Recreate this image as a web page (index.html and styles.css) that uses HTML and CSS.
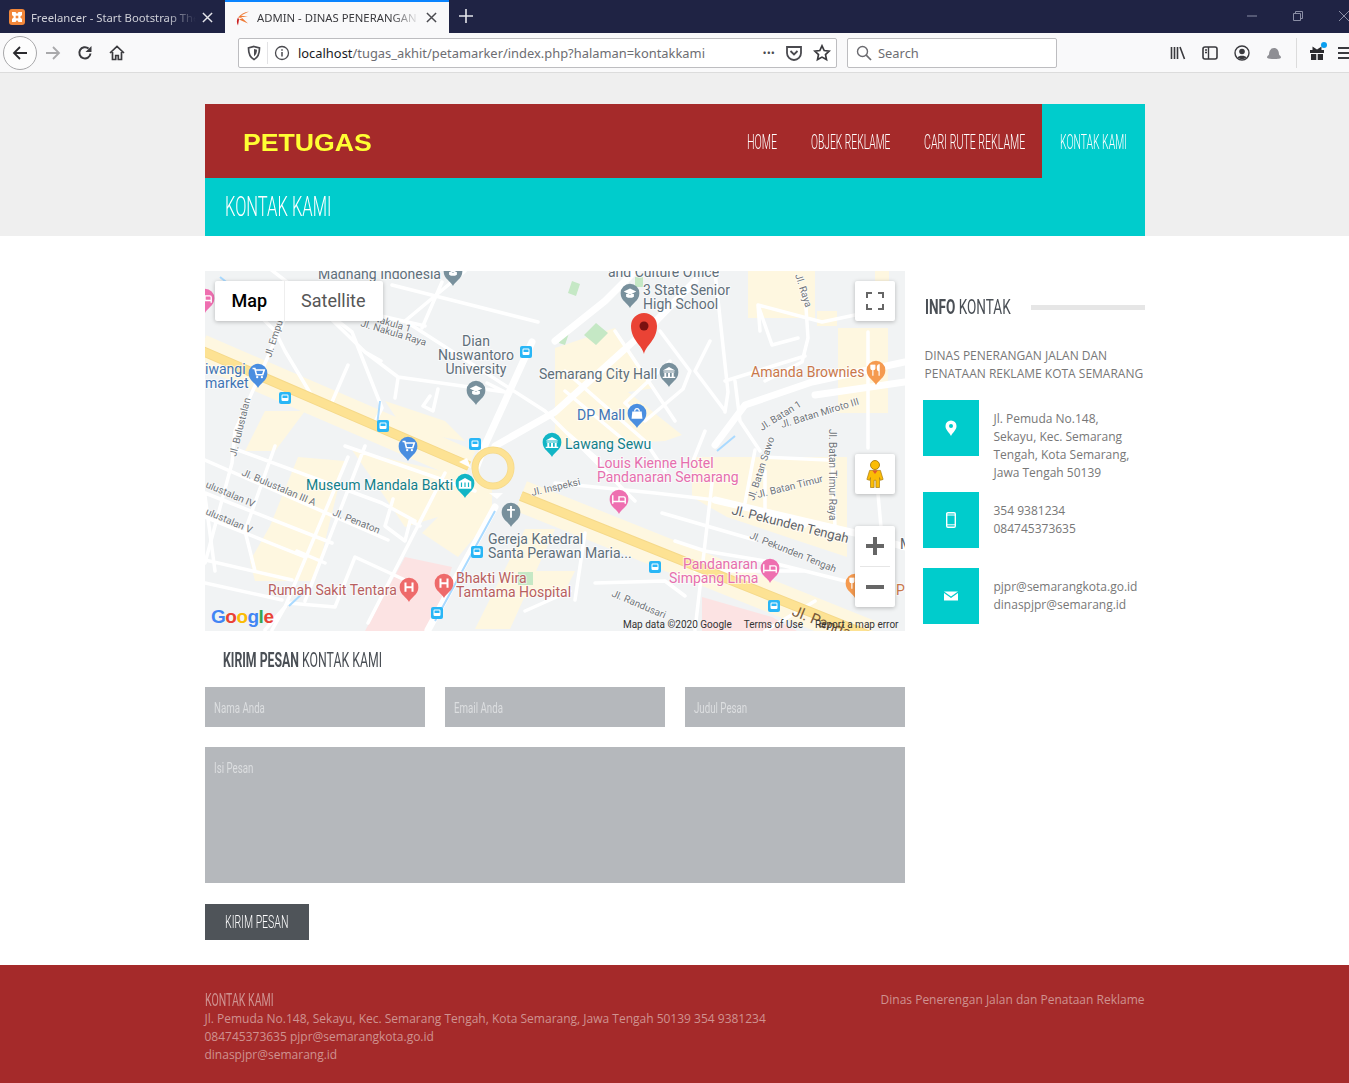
FILE: index.html
```html
<!DOCTYPE html>
<html lang="id">
<head>
<meta charset="utf-8">
<title>ADMIN - DINAS PENERANGAN</title>
<link rel="stylesheet" href="styles.css">
</head>
<body>
<div class="tabbar">
  <div class="tab tab-off">
    <svg class="fav" viewBox="0 0 16 16"><rect width="16" height="16" rx="3" fill="#f2873a"/><path d="M3 3h3.500L8 5l1.500-2H13v3l-2 2 2 2v3H9.500L8 11l-1.500 2H3v-3l2-2-2-2z" fill="#fff"/><rect x="6.700" y="6.700" width="2.600" height="2.600" fill="#f2873a"/></svg>
    <span class="tab-text">Freelancer - Start Bootstrap The</span>
    <svg class="tabx" viewBox="0 0 12 12"><path d="M1 1l10 10M11 1L1 11" stroke="#e4e5ea" stroke-width="1.600"/></svg>
  </div>
  <div class="tab tab-on">
    <svg class="fav" viewBox="0 0 16 16"><path d="M14 1.500C9 2 6 4 3 7.500L8 8 4 9.500l9 4-7-6.500 7 0-7-1.500z" fill="#ef7a35"/><path d="M3 7.500C1.500 10 1.500 13 3 15.500l1-6z" fill="#cc2020"/></svg>
    <span class="tab-text">ADMIN - DINAS PENERANGAN</span>
    <svg class="tabx" viewBox="0 0 12 12"><path d="M1 1l10 10M11 1L1 11" stroke="#4a4a4f" stroke-width="1.600"/></svg>
  </div>
  <svg class="newtab" viewBox="0 0 14 14"><path d="M7 0v14M0 7h14" stroke="#e4e5ea" stroke-width="1.600"/></svg>
  <div class="winbtns">
    <svg viewBox="0 0 10 10"><path d="M0 5h10" stroke="#8a8ea5"/></svg>
    <svg viewBox="0 0 10 10"><path d="M.5 2.500h7v7h-7zM2.500 2.500v-2h7v7h-2" fill="none" stroke="#8a8ea5"/></svg>
    <svg viewBox="0 0 10 10"><path d="M0 0l10 10M10 0L0 10" stroke="#8a8ea5"/></svg>
  </div>
</div>

<div class="toolbar">
  <div class="backbtn"><svg viewBox="0 0 16 16"><path d="M15 8H2M8 2L2 8l6 6" fill="none" stroke="#2a2a2e" stroke-width="1.800"/></svg></div>
  <svg class="tool tool-fwd" viewBox="0 0 16 16"><path d="M1 8h13M8 2l6 6-6 6" fill="none" stroke="#a9a9ab" stroke-width="1.800"/></svg>
  <svg class="tool tool-reload" viewBox="0 0 16 16"><path d="M13.500 8.500A5.600 5.600 0 1 1 11.600 3.600" fill="none" stroke="#3a3a3e" stroke-width="2"/><path d="M14.500 1v6h-6z" fill="#3a3a3e"/></svg>
  <svg class="tool tool-home" viewBox="0 0 16 16"><path d="M1 8l7-6.500L15 8M3.500 7v7.500h3.200v-4h2.600v4h3.200V7" fill="none" stroke="#3a3a3e" stroke-width="1.700"/></svg>
  <div class="urlbar">
    <svg class="ic16" viewBox="0 0 16 16"><path d="M8 1.500l5.500 1.500c0 6-1.500 9.500-5.500 11.500C4 12.500 2.500 9 2.500 3z" fill="none" stroke="#4a4a4f" stroke-width="1.700"/><path d="M8 4l3 .8c0 3-.8 5-3 6.500z" fill="#4a4a4f"/></svg>
    <span class="urlsep"></span>
    <svg class="ic16" viewBox="0 0 16 16"><circle cx="8" cy="8" r="6.500" fill="none" stroke="#4a4a4f" stroke-width="1.300"/><path d="M8 7v4.500M8 4.200v1.600" stroke="#4a4a4f" stroke-width="1.500"/></svg>
    <span class="urltext"><b>localhost</b>/tugas_akhit/petamarker/index.php?halaman=kontakkami</span>
    <span class="dots">•••</span>
    <svg class="ic18" viewBox="0 0 18 18"><path d="M2 3h14v6a7 7 0 0 1-14 0z" fill="none" stroke="#4a4a4f" stroke-width="1.800"/><path d="M5.500 7L9 10.500 12.500 7" fill="none" stroke="#4a4a4f" stroke-width="1.800"/></svg>
    <svg class="ic18" viewBox="0 0 18 18"><path d="M9 1.800l2.200 4.700 5 .6-3.700 3.500 1 5L9 13.100l-4.500 2.500 1-5-3.700-3.500 5-.6z" fill="none" stroke="#3a3a3e" stroke-width="1.700"/></svg>
  </div>
  <div class="searchbar">
    <svg class="ic16" viewBox="0 0 16 16"><circle cx="6.500" cy="6.500" r="5" fill="none" stroke="#6a6a6f" stroke-width="1.400"/><path d="M10.200 10.200L15 15" stroke="#6a6a6f" stroke-width="1.700"/></svg>
    <span>Search</span>
  </div>
  <div class="rightic">
    <svg class="ic16" viewBox="0 0 16 16"><path d="M1.500 2v12M4.500 2v12M7.500 2v12M10 2l4.500 12" stroke="#3a3a3e" stroke-width="1.600" fill="none"/></svg>
    <svg class="ic16" viewBox="0 0 16 16"><rect x="1" y="2" width="14" height="12" rx="2" fill="none" stroke="#3a3a3e" stroke-width="1.600"/><path d="M6.500 2v12M3 5h2M3 7.500h2" stroke="#3a3a3e" stroke-width="1.400"/></svg>
    <svg class="ic16" viewBox="0 0 16 16"><circle cx="8" cy="8" r="7" fill="none" stroke="#3a3a3e" stroke-width="1.400"/><circle cx="8" cy="6.500" r="2.800" fill="#3a3a3e"/><path d="M3.500 12.500c1-2.500 8-2.500 9 0-2.500 2-6.500 2-9 0z" fill="#3a3a3e"/></svg>
    <svg class="ic16" viewBox="0 0 16 16"><path d="M1 12.500c0-1.500 1.500-2 2-3 0-4 2-6.500 5-6.500s5 2.500 5 6.500c.5 1 2 1.500 2 3 0 1-3 1.500-7 1.500s-7-.5-7-1.500z" fill="#8f8f94"/></svg>
    <span class="toolsep"></span>
    <span class="gift">
      <svg class="ic16" viewBox="0 0 16 16"><path d="M1 5h14v3H1zM2 9h5.300v6H2zM8.700 9H14v6H8.700zM3.500 1.500L8 4.500l4.500-3v3.500h-9z" fill="#2a2a2e"/></svg>
      <i class="giftdot"></i>
    </span>
    <svg class="ic16 menuic" viewBox="0 0 16 16"><path d="M1 3h14M1 8h14M1 13h14" stroke="#3a3a3e" stroke-width="1.800"/></svg>
  </div>
</div>

<div class="hero">
  <div class="wrap">
    <header class="head">
      <div class="brand"><span class="brand-text">PETUGAS</span></div>
      <nav class="nav">
        <a class="nl nl-1"><span class="cond c-nav">HOME</span></a>
        <a class="nl nl-2"><span class="cond c-nav">OBJEK REKLAME</span></a>
        <a class="nl nl-3"><span class="cond c-nav">CARI RUTE REKLAME</span></a>
        <a class="nl nl-4 active"><span class="cond c-nav">KONTAK KAMI</span></a>
      </nav>
    </header>
    <div class="titlebar"><span class="cond c-title">KONTAK KAMI</span></div>
  </div>
</div>

<main class="wrap content">
  <section class="col-main">
    <div class="map">
      <svg class="mapsvg" viewBox="0 0 700 360" xmlns="http://www.w3.org/2000/svg">
        <defs>
          <path id="pin" transform="scale(.78)" d="M0 0C-2-6-12-9-12-19a12 12 0 0 1 24 0C12-9 2-6 0 0z"/>
          <g id="bus"><rect x="-6" y="-6" width="12" height="12" rx="2" fill="#29b6f6"/><rect x="-3.500" y="-3.500" width="7" height="6.500" rx="1.200" fill="#fff"/><rect x="-2.500" y="-2.500" width="5" height="2.500" fill="#29b6f6"/></g>
          <g id="hosp" transform="scale(.78)"><path d="M-4.500-25v12M4.500-25v12M-4.500-19h9" stroke="#fff" stroke-width="2.600" fill="none"/></g>
          <g id="bed" transform="scale(.78)"><path d="M-8-24v11M-8-16H8v3M-8-16h16v-4a2 2 0 0 0-2-2h-6v6" stroke="#fff" stroke-width="1.800" fill="none"/></g>
          <g id="cart" transform="scale(.78)"><path d="M-7-25h3l2 8h8l2-6H-3" stroke="#fff" stroke-width="2" fill="none"/><circle cx="-1" cy="-14" r="1.500" fill="#fff"/><circle cx="5" cy="-14" r="1.500" fill="#fff"/></g>
          <g id="cap" transform="scale(.78)"><path d="M-8-21l8-4 8 4-8 4zM-5-18v3.500c3 2 7 2 10 0V-18" fill="#fff"/></g>
          <g id="hall" transform="scale(.78)"><path d="M-8-21l8-4.500L8-21zM-7-20h14v1.500H-7zM-6-18h2.500v5H-6zM-1.300-18h2.600v5h-2.600zM3.500-18H6v5H3.500zM-8-13H8v1.500H-8z" fill="#fff"/></g>
          <g id="bag" transform="scale(.78)"><path d="M-6-21H6l1 9H-7z" fill="#fff"/><path d="M-3-21c0-5 6-5 6 0" stroke="#fff" stroke-width="1.500" fill="none"/></g>
          <g id="muse" transform="scale(.78)"><path d="M-8-21l8-4.500L8-21v9H-8z" fill="#fff"/><path d="M-4.500-20v6M0-20v6M4.500-20v6" stroke="#12b5c5" stroke-width="1.500"/></g>
          <g id="cross" transform="scale(.78)"><path d="M0-27v15M-5-22H5" stroke="#fff" stroke-width="2.400"/></g>
          <g id="fork" transform="scale(.78)"><path d="M-4-26v14M-6.500-26v5c0 2 5 2 5 0v-5M4-26v14c0 0 0-6 0-6-3 0-3-8 0-8z" stroke="#fff" stroke-width="1.500" fill="#fff"/></g>
        </defs>
        <rect class="m-bg" width="700" height="360"/>
        <g class="m-pale">
          <path d="M543 0h67v47h-67zM612 40h20v15h-20zM633 57h50v85h-50zM350 77l60-20 40 60-27 4 54 43-17 6-110 5zM670 0h14v20h-14z"/>
          <path d="M93 186l47 4-30 120H50l-5-20 20-35zM147 179l140 33v33l-34 41-36-24 16-16-33 10-27-40zM487 186h155v100l-120-40-35-20z"/>
          <path d="M180 130l60 20 20 20-60-10zM320 258h30l-45 100h-35zM310 300h60l-10 20-60 10zM60 140h40l-30 40H40z"/>
        </g>
        <path class="m-halo" d="M-5 79L264 195M316 225L665 365"/>
        <path class="m-pink" d="M200 286l-40 74h65l22-64z"/>
        <path class="m-pink" d="M497 326l70 20 25 14h-95z"/>
        <path class="m-green" d="M391 52l12 10-12 12-12-10zM367 10l8 3-4 12-8-3zM430 6h8v10h-8zM358 60l6 2-4 12-6-2zM313 301h15v13h-15z"/>
        <g class="m-road">
          <path d="M80 47L30 160 27 192 0 292M60-6L147 61 177 137 170 151M160 81L193 106 300 121M187 14L333 51M193 107L190 127M143 94L127 131M237 11L217 57M60 20L50 40 70 60 80 80 110 130M120 42L160 81 176 90M300 121L282 112M163 42L220 55M225 125L218 135 228 140 233 118"/>
          <path d="M0 189L183 269M33 179L177 232 210 250M0 222L127 272M0 246L100 286M0 289L87 309M0 312L77 329M83 332L130 336 150 286 200 309M143 186L80 336 67 359M160 175L100 330M240 202L163 352M140 175L270 220M70 175L40 260 50 300M188 228L180 255 200 270 205 250 215 255M92 280L120 292M0 225L10 300"/>
          <path d="M510 1L523 121 520 141M600 21L603 67 597 91 560 110M683 37L617 51 553 34 567 74 593 67M663 61L663 177M553 34L555 60M520 110L600 85M505 70L490 100 520 140M530 110L535 150M535 150L555 180M455 60L485 100 478 118 440 150 420 132 465 90M410 60L470 150M360 120L420 170M500 160L488 190"/>
          <path d="M507 212L490 359M457 242L550 269M350 212L450 222 510 229M550 179L540 232M557 186L623 189M627 186L630 256M380 262L370 329M390 312L460 310 480 325M560 200L560 245 600 255M670 190L680 300M80 336L60 359M260 0L200 50 340 140 430 230M360 100L440 170 460 200M470 270L500 280 560 290 640 310M360 160L395 190M490 300L540 300 600 300M610 330L560 360M320 340L365 320"/>
        </g>
        <g class="m-road m-wide">
          <path d="M327 71L280 174 270 200M290 175L350 141 450 51 490 10M700 91L607 111 540 134 510 174M700 111L610 124M510 229L650 262 700 276M290 236L223 359M430 0L400 30 350 70"/>
        </g>
        <path class="m-stream" d="M290 240L230 350M100 320L84 335M15 6L30 18M175 130L172 155M530 165L512 180"/>
        <g fill="none">
          <path class="m-yedge" d="M-5 79L264 195M316 225L665 365"/>
          <path class="m-yel" d="M-5 79L264 195M316 225L665 365"/>
          <circle class="m-edgering" cx="288" cy="197" r="18"/>
          <circle class="m-ring" cx="288" cy="197" r="18"/>
        </g>
        <path class="m-gap" d="M262 187l-8 4 12 6zM284 222h14l-6 6z"/>

        <g class="m-bus">
          <use href="#bus" x="80" y="127"/><use href="#bus" x="178" y="155"/><use href="#bus" x="321" y="81"/><use href="#bus" x="270" y="173"/><use href="#bus" x="272" y="281"/><use href="#bus" x="232" y="342"/><use href="#bus" x="450" y="296"/><use href="#bus" x="569" y="335"/>
        </g>

        <g class="t-s">
          <text transform="translate(155 46) rotate(17)">Jl. Nakula 1</text>
          <text transform="translate(155 55) rotate(17)">Jl. Nakula Raya</text>
          <text transform="translate(66 87) rotate(-72)">Jl. Empu</text>
          <text transform="translate(31 186) rotate(-76)">Jl. Bulustalan</text>
          <text transform="translate(36 204) rotate(23)">Jl. Bulustalan III A</text>
          <text transform="translate(0 216) rotate(23)">ulustalan IV</text>
          <text transform="translate(0 243) rotate(23)">ulustalan V</text>
          <text transform="translate(127 244) rotate(22)">Jl. Penaton</text>
          <text transform="translate(327 225) rotate(-13)">Jl. Inspeksi</text>
          <text transform="translate(557 160) rotate(-32)">Jl. Batan 1</text>
          <text transform="translate(577 157) rotate(-17)">Jl. Batan Miroto III</text>
          <text transform="translate(624 158) rotate(90)">Jl. Batan Timur Raya</text>
          <text transform="translate(549 230) rotate(-72)">Jl. Batan Sawo</text>
          <text transform="translate(553 227) rotate(-14)">Jl. Batan Timur</text>
          <text transform="translate(544 267) rotate(22)">Jl. Pekunden Tengah</text>
          <text transform="translate(406 325) rotate(23)">Jl. Randusari</text>
          <text transform="translate(590 4) rotate(72)">Jl. Raya</text>
        </g>
        <text class="t-m" transform="translate(526 243) rotate(14)">Jl. Pekunden Tengah</text>
        <text class="t-road" transform="translate(586 344) rotate(22)">Jl. Pandanaran</text>

        <g class="t-l t-grey">
          <text x="113" y="8">Madhang Indonesia</text>
          <text x="403" y="6">and Culture Office</text>
          <text x="438" y="24">3 State Senior</text>
          <text x="438" y="38">High School</text>
          <text x="271" y="75" text-anchor="middle">Dian</text>
          <text x="271" y="89" text-anchor="middle">Nuswantoro</text>
          <text x="271" y="103" text-anchor="middle">University</text>
          <text x="334" y="108">Semarang City Hall</text>
          <text x="283" y="273">Gereja Katedral</text>
          <text x="283" y="287">Santa Perawan Maria...</text>
        </g>
        <g class="t-l">
          <text class="c-blue" x="0" y="103">iwangi</text>
          <text class="c-blue" x="0" y="117">market</text>
          <text class="c-orange" x="546" y="106">Amanda Brownies</text>
          <text class="c-blue" x="372" y="149">DP Mall</text>
          <text class="c-teal" x="360" y="178">Lawang Sewu</text>
          <text class="c-hotel" x="392" y="197">Louis Kienne Hotel</text>
          <text class="c-hotel" x="392" y="211">Pandanaran Semarang</text>
          <text class="c-teal" x="101" y="219">Museum Mandala Bakti</text>
          <text class="c-red" x="63" y="324">Rumah Sakit Tentara</text>
          <text class="c-red" x="251" y="312">Bhakti Wira</text>
          <text class="c-red" x="251" y="326">Tamtama Hospital</text>
          <text class="c-hotel" x="478" y="298">Pandanaran</text>
          <text class="c-hotel" x="464" y="312">Simpang Lima</text>
          <text class="c-orange" x="691" y="324">P</text>
          <text class="t-dark" x="695" y="278">M</text>
        </g>

        <g class="p-steel"><use href="#pin" x="248" y="15"/><use href="#pin" x="425" y="37"/><use href="#pin" x="271" y="134"/><use href="#pin" x="464" y="116"/><use href="#pin" x="306" y="256"/></g>
        <g class="p-blue"><use href="#pin" x="53" y="117"/><use href="#pin" x="203" y="190"/><use href="#pin" x="432" y="157"/></g>
        <g class="p-teal"><use href="#pin" x="347" y="186"/><use href="#pin" x="260" y="227"/></g>
        <g class="p-pink"><use href="#pin" x="414" y="243"/><use href="#pin" x="565" y="312"/><use href="#pin" x="0" y="42"/></g>
        <g class="p-red"><use href="#pin" x="204" y="331"/><use href="#pin" x="239" y="327"/></g>
        <g class="p-orange"><use href="#pin" x="671" y="114"/><use href="#pin" x="650" y="327"/></g>

        <use href="#cap" x="248" y="15"/>
        <use href="#cap" x="425" y="37"/><use href="#cap" x="271" y="134"/><use href="#hall" x="464" y="116"/><use href="#cross" x="306" y="256"/>
        <use href="#cart" x="53" y="117"/><use href="#cart" x="203" y="190"/><use href="#bag" x="432" y="157"/>
        <use href="#hall" x="347" y="186"/><use href="#muse" x="260" y="227"/>
        <use href="#bed" x="414" y="243"/><use href="#bed" x="565" y="312"/><use href="#bed" x="0" y="42"/>
        <use href="#hosp" x="204" y="331"/><use href="#hosp" x="239" y="327"/>
        <use href="#fork" x="671" y="114"/><use href="#fork" x="650" y="327"/>

        <path class="p-main" d="M439 83c-2-9-13-14-13-28a13 13 0 0 1 26 0c0 14-11 19-13 28z"/>
        <circle class="p-dot" cx="439" cy="55" r="4.500"/>

        <text class="g-logo" x="6" y="352"><tspan fill="#4285f4">G</tspan><tspan fill="#ea4335">o</tspan><tspan fill="#fbbc05">o</tspan><tspan fill="#4285f4">g</tspan><tspan fill="#34a853">l</tspan><tspan fill="#ea4335">e</tspan></text>
      </svg>

      <div class="maptype">
        <span class="mt mt-on">Map</span>
        <span class="mt">Satellite</span>
      </div>
      <div class="mapbtn fs"><svg viewBox="0 0 18 18"><path d="M1 6V1h5M12 1h5v5M17 12v5h-5M6 17H1v-5" fill="none" stroke="#666" stroke-width="2"/></svg></div>
      <div class="mapbtn peg"><svg viewBox="0 0 20 32"><circle cx="10" cy="6" r="5" fill="#fbbc05" stroke="#a87a10"/><path d="M4 12h12l3 10-3 1-1-3v11h-4v-8h-2v8H5V20l-1 3-3-1z" fill="#fbbc05" stroke="#a87a10" stroke-width=".8"/><path d="M7 12l3 4 3-4z" fill="#e2572f"/></svg></div>
      <div class="mapbtn zoomctl">
        <svg viewBox="0 0 18 18"><path d="M9 0v18M0 9h18" stroke="#666" stroke-width="4"/></svg>
        <i class="zsep"></i>
        <svg viewBox="0 0 18 18"><path d="M0 9h18" stroke="#666" stroke-width="4"/></svg>
      </div>
      <div class="mapfoot">
        <span>Map data ©2020 Google</span><span>Terms of Use</span><span>Report a map error</span>
      </div>
    </div>

    <h3 class="formhead"><span class="cond c-form"><b>KIRIM PESAN</b> KONTAK KAMI</span></h3>
    <form class="form">
      <div class="frow">
        <div class="inp"><span class="cond c-ph">Nama Anda</span></div>
        <div class="inp"><span class="cond c-ph">Email Anda</span></div>
        <div class="inp"><span class="cond c-ph">Judul Pesan</span></div>
      </div>
      <div class="inp area"><span class="cond c-ph">Isi Pesan</span></div>
      <div class="btn"><span class="cond c-btn">KIRIM PESAN</span></div>
    </form>
  </section>

  <aside class="col-side">
    <div class="sidehead"><span class="cond c-side"><b>INFO</b> KONTAK</span><i class="siderule"></i></div>
    <p class="sidelead">DINAS PENERANGAN JALAN DAN PENATAAN REKLAME KOTA SEMARANG</p>
    <div class="ci ci-1">
      <div class="cibox"><svg viewBox="0 0 14 16"><path d="M7 16C5 12 1.500 10 1.500 6a5.500 5.500 0 0 1 11 0c0 4-3.500 6-5.500 10z" fill="#fff"/><circle cx="7" cy="6" r="2" fill="#00cccc"/></svg></div>
      <p>Jl. Pemuda No.148, Sekayu, Kec. Semarang Tengah, Kota Semarang, Jawa Tengah 50139</p>
    </div>
    <div class="ci ci-2">
      <div class="cibox"><svg viewBox="0 0 14 16"><rect x="2.700" y=".7" width="8.600" height="14.600" rx="1.200" fill="none" stroke="#fff" stroke-width="1.400"/><path d="M3 12.800h8M3 3h8" stroke="#fff"/></svg></div>
      <p>354 9381234<br>084745373635</p>
    </div>
    <div class="ci ci-3">
      <div class="cibox"><svg viewBox="0 0 14 16"><path d="M0 3.500h14L7 8.500z" fill="#fff"/><path d="M0 5l7 5 7-5v7.500H0z" fill="#fff"/></svg></div>
      <p>pjpr@semarangkota.go.id<br>dinaspjpr@semarang.id</p>
    </div>
  </aside>
</main>

<footer class="footer">
  <div class="wrap footin">
    <div class="footl">
      <div class="foothead"><span class="cond c-foot">KONTAK KAMI</span></div>
      <p>Jl. Pemuda No.148, Sekayu, Kec. Semarang Tengah, Kota Semarang, Jawa Tengah 50139 354 9381234<br>084745373635 pjpr@semarangkota.go.id<br>dinaspjpr@semarang.id</p>
    </div>
    <div class="footr">Dinas Penerengan Jalan dan Penataan Reklame</div>
  </div>
</footer>
</body>
</html>
```
FILE: styles.css
```css
* { box-sizing: border-box; }
html, body { margin: 0; padding: 0; }
body { font-family: "Open Sans", sans-serif; background: #fff; color: #666; overflow: hidden; }
svg { display: block; flex: none; }

/* browser chrome */
.tabbar { height: 33px; background: #1f2344; display: flex; align-items: stretch; position: relative; font-family: "Noto Sans", sans-serif; font-size: 11.300px; }
.tab { display: flex; align-items: center; }
.tab-off { width: 225px; padding: 1px 6px 0 9px; color: #cfd0d8; }
.tab-on { width: 224px; padding: 0 11px 0 10px; background: #f9f9fa; border-top: 2px solid #0a84ff; color: #3a3a3e; }
.fav { width: 16px; height: 16px; }
.tab-text { margin-left: 6px; flex: 1; overflow: hidden; white-space: nowrap; -webkit-mask-image: linear-gradient(90deg,#000 82%,transparent); mask-image: linear-gradient(90deg,#000 82%,transparent); }
.tabx { width: 11px; height: 11px; margin: 0 6px; }
.tab-on .tabx { margin: 0 1px 0 6px; }
.newtab { width: 14px; height: 14px; margin: 9px 0 0 10px; }
.winbtns { margin-left: auto; display: flex; gap: 36px; padding: 11px 0 0; margin-right: 0; }
.winbtns svg { width: 10px; height: 10px; }

.toolbar { height: 40px; background: #f9f9fa; border-bottom: 1px solid #dcdcdc; display: flex; align-items: center; padding-left: 3px; overflow: hidden; }
.backbtn { flex: none; width: 34px; height: 34px; border: 1px solid #a8a8aa; border-radius: 50%; background: #fdfdfd; display: flex; align-items: center; justify-content: center; }
.backbtn svg { width: 16px; height: 16px; }
.tool { width: 16px; height: 16px; }
.tool-fwd { margin-left: 8px; }
.tool-reload { margin-left: 16px; }
.tool-home { margin-left: 16px; }
.urlbar { flex: none; width: 599px; height: 30px; margin-left: 113px; background: #fff; border: 1px solid #bdbdc0; border-radius: 2px; display: flex; align-items: center; padding: 0 5px 0 7px; }
.urlsep { width: 1px; height: 22px; background: #e3e3e5; margin: 0 6px 0 5px; }
.ic16 { width: 16px; height: 16px; }
.ic18 { width: 18px; height: 18px; margin-left: 10px; }
.urltext { margin-left: 8px; padding-top: 1px; font-family: "Noto Sans", sans-serif; font-size: 12.900px; color: #6d6d72; white-space: nowrap; flex: 1; overflow: hidden; }
.urltext b { color: #1a1a1e; font-weight: 400; }
.dots { font-size: 11px; color: #4a4a4f; }
.searchbar { flex: none; width: 210px; height: 30px; margin-left: 10px; background: #fff; border: 1px solid #bdbdc0; border-radius: 2px; display: flex; align-items: center; gap: 6px; padding: 1px 0 0 8px; font-family: "Noto Sans", sans-serif; font-size: 12.900px; color: #6d6d72; }
.rightic { flex: none; display: flex; align-items: center; margin-left: 113px; gap: 16px; }
.toolsep { width: 1px; height: 30px; background: #dcdcdc; margin: 0 -4px 0 -2px; }
.gift { position: relative; display: block; }
.giftdot { position: absolute; top: -3px; right: -2px; width: 6px; height: 6px; border-radius: 50%; background: #0a9ff0; }
.menuic { margin-left: -4px; }

/* condensed headline text: the page's face is a narrow one */
.cond { display: inline-block; font-family: Roboto, sans-serif; font-weight: 300; white-space: nowrap; transform-origin: left center; }
.cond b { font-weight: 700; }

/* hero */
.hero { background: #efefef; height: 163px; padding-top: 31px; }
.wrap { width: 940px; margin: 0 auto; }
.head { height: 74px; background: #a52a2a; display: flex; justify-content: space-between; }
.brand { padding: 3px 0 0 38px; display: flex; align-items: center; }
.brand-text { display: inline-block; font-family: "Liberation Sans", sans-serif; font-weight: 700; font-size: 24px; color: #ffff33; transform: scaleX(1.11); transform-origin: left center; }
.nav { display: flex; }
.nl { display: flex; align-items: center; padding-top: 1px; color: #fff; }
.nl-1 { width: 64px; padding-left: 17px; }
.nl-2 { width: 113px; padding-left: 17px; }
.nl-3 { width: 135px; padding-left: 17px; }
.nl-4 { width: 103px; padding-left: 18px; }
.nl.active { background: #00cccc; }
.c-nav { font-size: 21px; }
.nl-1 .c-nav { transform: scaleX(.51); }
.nl-2 .c-nav { transform: scaleX(.49); }
.nl-3 .c-nav { transform: scaleX(.505); }
.nl-4 .c-nav { transform: scaleX(.495); }
.titlebar { height: 58px; background: #00cccc; display: flex; align-items: center; padding: 0 0 2px 20px; color: #fff; }
.c-title { font-size: 28px; transform: scaleX(.59); }

/* content */
.content { display: grid; grid-template-columns: 700px 220px; column-gap: 20px; padding-top: 35px; height: 729px; }
.map { position: relative; width: 700px; height: 360px; overflow: hidden; }
.mapsvg { width: 700px; height: 360px; font-family: Roboto, sans-serif; }
.m-bg { fill: #f1f3f4; }
.m-pale path { fill: #fef7e0; }
.m-halo { fill: none; stroke: #fef7e0; stroke-width: 32; }
.m-pink { fill: #fce3e3; }
.m-green { fill: #c5e8c5; }
.m-road path { fill: none; stroke: #fff; stroke-width: 3.500; stroke-linejoin: round; stroke-linecap: round; }
.m-wide path { stroke-width: 7; }
.m-stream { fill: none; stroke: #aadaff; stroke-width: 2; }
.m-yedge { stroke: #f5d98a; stroke-width: 10; }
.m-yel { stroke: #fde293; stroke-width: 8; }
.m-edgering { stroke: #f5d98a; stroke-width: 7; }
.m-ring { stroke: #fde293; stroke-width: 5.500; }
.m-gap { fill: #fff; }
.t-s { font-size: 10px; fill: #70757a; paint-order: stroke; stroke: #fff; stroke-width: 1.500px; stroke-opacity: .7; }
.t-m { font-size: 13px; fill: #5f6368; paint-order: stroke; stroke: #fff; stroke-width: 2px; stroke-opacity: .7; }
.t-road { font-size: 15px; fill: #7a5a38; }
.t-l { font-size: 14px; paint-order: stroke; stroke: #fff; stroke-width: 2px; stroke-opacity: .6; }
.t-grey { fill: #5f6f7a; }
.c-blue { fill: #3f74b5; }
.c-orange { fill: #c9774a; }
.c-teal { fill: #12808a; }
.c-hotel { fill: #e66fae; }
.c-red { fill: #b85f5f; }
.t-dark { fill: #5f6368; }
.p-steel { fill: #78909c; }
.p-blue { fill: #4a8ee0; }
.p-teal { fill: #12b5c5; }
.p-pink { fill: #ee6fb0; }
.p-red { fill: #ee6a6a; }
.p-orange { fill: #f59a4f; }
.p-main { fill: #ea4335; }
.p-dot { fill: #7a1111; }
.g-logo { font-family: "Liberation Sans", sans-serif; font-size: 19px; font-weight: 700; letter-spacing: -.5px; }

.maptype { position: absolute; left: 10px; top: 10px; height: 40px; display: flex; background: #fff; border-radius: 2px; box-shadow: 0 1px 4px rgba(0,0,0,.25); font-family: Roboto, sans-serif; font-size: 18px; }
.mt { display: flex; align-items: center; padding: 0 17px 2px; color: #565656; }
.mt + .mt { border-left: 1px solid #eee; padding: 0 17px 2px 16px; }
.mt-on { color: #000; font-weight: 500; }
.mapbtn { position: absolute; right: 10px; width: 40px; background: #fff; border-radius: 2px; box-shadow: 0 1px 4px rgba(0,0,0,.25); display: flex; flex-direction: column; align-items: center; justify-content: center; }
.fs { top: 10px; height: 40px; }
.fs svg { width: 18px; height: 18px; }
.peg { top: 183px; height: 40px; }
.peg svg { width: 18px; height: 32px; }
.zoomctl { top: 255px; height: 81px; gap: 10px; }
.zoomctl svg { width: 18px; height: 18px; margin: 1px 0; }
.zsep { display: block; width: 30px; height: 1px; background: #e6e6e6; }
.mapfoot { position: absolute; right: 0; bottom: 0; height: 14px; padding: 0 6px 0 0; display: flex; gap: 12px; align-items: center; font-family: Roboto, sans-serif; font-size: 10px; color: #333; }

.formhead { margin: 0; height: 56px; padding: 16px 0 0 18px; font-weight: 400; color: #4a4f55; }
.c-form { font-size: 21px; font-weight: 400; transform: scaleX(.585); line-height: 23px; }
.form { display: flex; flex-direction: column; gap: 20px; }
.frow { display: flex; gap: 20px; }
.inp { flex: 1; height: 40px; background: #b5b8bc; padding: 9px 9px 0; color: #dcdee0; }
.area { flex: none; height: 136px; }
.c-ph { font-size: 14.500px; font-weight: 400; line-height: 20px; transform: scaleX(.67); }
.btn { width: 104px; height: 36px; margin-top: 1px; background: #4f5459; color: #fff; display: flex; align-items: center; padding: 0 0 2px 20px; }
.c-btn { font-size: 18px; transform: scaleX(.585); }

.sidehead { display: flex; align-items: center; height: 24px; margin-top: 24px; position: relative; color: #4a4f55; }
.c-side { font-size: 21px; font-weight: 400; transform: scaleX(.645); }
.siderule { position: absolute; left: 106px; right: 0; top: 10px; height: 5px; background: #e6e6e6; }
.sidelead { margin: 28px 0 0; font-size: 12px; line-height: 18px; color: #777; }
.ci { display: flex; margin-left: -2px; gap: 15px; }
.ci-1 { margin-top: 17px; }
.ci-2 { margin-top: 10px; }
.ci-3 { margin-top: 20px; }
.cibox { flex: none; width: 56px; height: 56px; background: #00cccc; display: flex; align-items: center; justify-content: center; }
.cibox svg { width: 14px; height: 16px; }
.ci p { margin: 10px 0 0; font-size: 12px; line-height: 18px; color: #777; }
.ci-1 p { width: 140px; }

/* footer */
.footer { height: 118px; background: #a52a2a; color: #cf9290; font-size: 12px; line-height: 18px; }
.footin { display: flex; justify-content: space-between; padding-top: 24px; }
.footl { width: 600px; }
.foothead { height: 21px; display: flex; align-items: center; }
.c-foot { font-size: 18px; font-weight: 400; transform: scaleX(.585); }
.footl p { margin: 0; }
.footr { padding-top: 2px; }
```
